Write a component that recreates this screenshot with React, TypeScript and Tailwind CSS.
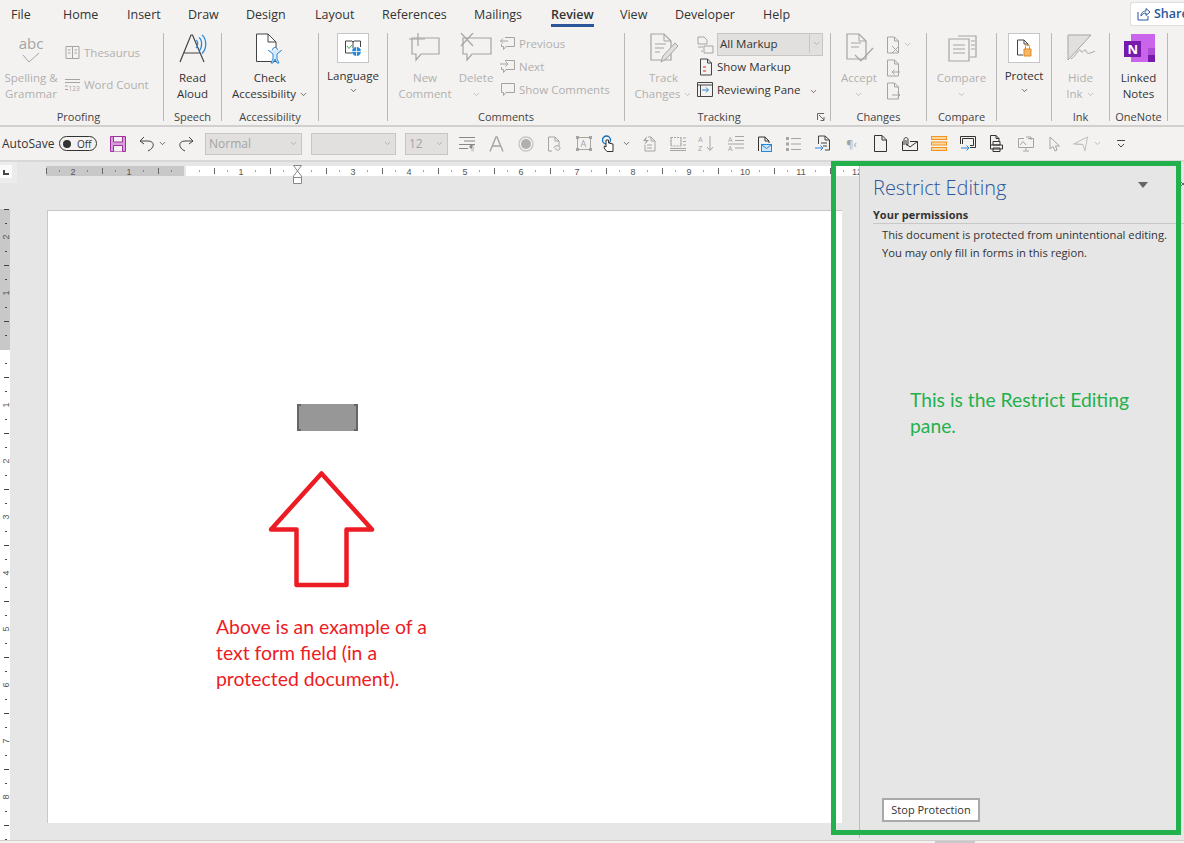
import type { ReactNode } from 'react';
import { ChevronDown } from 'lucide-react';

const ui = { fontFamily: '"Open Sans", "Noto Sans", sans-serif' };

const tabs = [
    { t: 'File', w: 'w-[52px]' },
    { t: 'Home', w: 'w-[64px]' },
    { t: 'Insert', w: 'w-[61px]' },
    { t: 'Draw', w: 'w-[58px]' },
    { t: 'Design', w: 'w-[69px]' },
    { t: 'Layout', w: 'w-[67px]' },
    { t: 'References', w: 'w-[92px]' },
    { t: 'Mailings', w: 'w-[77px]' },
    { t: 'Review', w: 'w-[69px]' },
    { t: 'View', w: 'w-[55px]' },
    { t: 'Developer', w: 'w-[88px]' },
    { t: 'Help', w: 'w-[50px]' },
];

const Chev = ({ className = 'text-[#444]' }: { className?: string }) => (
    <ChevronDown size={9} strokeWidth={2} className={`inline-block shrink-0 ${className}`} />
);

const Svg = ({ w, h, children, className = '' }: { w: number; h: number; children: ReactNode; className?: string }) => (
    <svg width={w} height={h} viewBox={`0 0 ${w} ${h}`} fill="none" className={`shrink-0 ${className}`}>
        {children}
    </svg>
);

// one ribbon group, width includes the separator on its right
const Group = ({ w, label, labelClass = '', extra, children }: { w: string; label?: string; labelClass?: string; extra?: ReactNode; children: ReactNode }) => (
    <div className={`flex h-[88px] shrink-0 flex-col border-r border-[#b9b8b6] ${w}`}>
        <div className="flex h-[76px] shrink-0">{children}</div>
        <div className="flex h-4 shrink-0 items-center">
            <div className={`flex-1 text-center text-[11px] leading-4 text-[#444] ${labelClass}`}>{label}</div>
            {extra}
        </div>
    </div>
);

const BigLabel = ({ children, off }: { children: ReactNode; off?: boolean }) => (
    <div className={`whitespace-nowrap text-center text-[11.5px] leading-4 ${off ? 'text-[#b1b0ae]' : 'text-[#333]'}`}>{children}</div>
);

const SmallRow = ({ icon, text, off, gap = 'gap-1' }: { icon: ReactNode; text: string; off?: boolean; gap?: string }) => (
    <div className={`flex h-[23px] items-center text-[11.5px] ${gap} ${off ? 'text-[#b1b0ae]' : 'text-[#333]'}`}>
        {icon}
        <span className="whitespace-nowrap">{text}</span>
    </div>
);

const G = '#a5a4a2';

const BubbleIcon = ({ arrow }: { arrow?: 'l' | 'r' }) => (
    <Svg w={15} h={15}>
        <path d={arrow ? 'M5 1.5H14.5V10.5H6L3.5 13.5V10.5H1.5V8' : 'M1.5 1.5H14.5V10.5H6L3.5 13.5V10.5H1.5Z'} stroke={G} />
        {arrow === 'l' && <path d="M8 5H.5M3 2.5L.5 5L3 7.5" stroke={G} />}
        {arrow === 'r' && <path d="M0 5H8M5.5 2.5L8 5L5.5 7.5" stroke={G} />}
    </Svg>
);

const DocIcon = ({ stroke = G, children }: { stroke?: string; children?: ReactNode }) => (
    <Svg w={14} h={18}>
        <path d="M1.5 1H8.5L12.5 5V17H1.5Z" stroke={stroke} />
        <path d="M8.5 1V5H12.5" stroke={stroke} />
        {children}
    </Svg>
);

function Ribbon() {
    return (
        <div className="flex h-[96px] bg-[#f3f2f1] pl-[2px] pt-[4px]">
            <Group w="w-[162px]" label="Proofing" labelClass="pr-[8px]">
                <div className="flex w-[58px] flex-col items-center">
                    <div className="mt-[2px] text-[15px] leading-[16px] text-[#a5a4a2]">abc</div>
                    <Svg w={20} h={13} className="mt-[1px]">
                        <path d="M2 3L8 10L18 1" stroke={G} />
                    </Svg>
                    <div className="mt-[5px]">
                        <BigLabel off>Spelling &amp;</BigLabel>
                        <BigLabel off>Grammar</BigLabel>
                    </div>
                </div>
                <div className="ml-[5px] flex flex-col pt-[8px]">
                    <SmallRow
                        off
                        text="Thesaurus"
                        icon={
                            <Svg w={15} h={15}>
                                <path d="M1 1.5H14V13.5H1ZM7.5 1.5V13.5M3 5H5.5M3 8H5.5M9.5 5H12M9.5 8H12" stroke={G} />
                            </Svg>
                        }
                    />
                    <div className="h-[9px]" />
                    <SmallRow
                        off
                        gap="gap-[4px]"
                        text="Word Count"
                        icon={
                            <Svg w={15} h={15}>
                                <path d="M0 2.5H15M0 5.5H15M0 9H3M0 12.5H3" stroke={G} />
                                <text x="3.5" y="14" fontSize="6.5" fill={G}>123</text>
                            </Svg>
                        }
                    />
                </div>
            </Group>
            <Group w="w-[58px]" label="Speech">
                <div className="flex w-full flex-col items-center">
                    <Svg w={32} h={32}>
                        <path d="M3 29L14 2H15.5L27 29M7 20H23" stroke="#444" strokeWidth="1.2" />
                        <path d="M19 7C21 8 21.5 13 19 15M22 4.5C25.5 7 25.5 15 22 18M25 2C30 6 30 16 25 20.5" stroke="#2b88d8" strokeWidth="1.3" />
                    </Svg>
                    <div className="mt-[5px]">
                        <BigLabel>Read</BigLabel>
                        <BigLabel>Aloud</BigLabel>
                    </div>
                </div>
            </Group>
            <Group w="w-[97px]" label="Accessibility">
                <div className="flex w-full flex-col items-center">
                    <Svg w={30} h={32}>
                        <path d="M1.5 1H13L21 9V28.5H1.5Z" fill="#fff" stroke="#444" />
                        <path d="M13 1V9H21" stroke="#444" />
                        <circle cx="20" cy="17" r="2.5" stroke="#2b88d8" fill="#fff" />
                        <path d="M13 17L18 21V26L16 30H18L20 26L22 30H24L22 26V21L27 17" stroke="#2b88d8" fill="#d6e9f8" />
                    </Svg>
                    <div className="mt-[5px]">
                        <BigLabel>Check</BigLabel>
                        <BigLabel>
                            Accessibility <Chev />
                        </BigLabel>
                    </div>
                </div>
            </Group>
            <Group w="w-[69px]">
                <div className="flex w-full flex-col items-center">
                    <div className="flex h-[30px] w-[32px] items-center justify-center border border-[#c6c6c6] bg-white">
                        <Svg w={18} h={18}>
                            <path d="M8 14H1.5V2H8L9 3L10 2H16.5V8M9 3V9" stroke="#444" />
                            <path d="M3 7L5 9.5L8 6" stroke="#3aa655" />
                            <circle cx="12.5" cy="12.5" r="4.5" fill="#2b88d8" />
                            <path d="M8 12.5H17M12.5 8V17" stroke="#fff" strokeWidth=".8" />
                        </Svg>
                    </div>
                    <div className="mt-[5px]">
                        <BigLabel>Language</BigLabel>
                    </div>
                    <div className="leading-[10px]">
                        <Chev />
                    </div>
                </div>
            </Group>
            <Group w="w-[237px]" label="Comments">
                <div className="flex w-[72px] flex-col items-center pl-[2px]">
                    <Svg w={32} h={32}>
                        <path d="M3 5H30V21H12L7 27V21H3Z" stroke={G} strokeWidth="1.2" />
                        <path d="M0 6H16M9 0V13" stroke={G} strokeWidth="1.2" />
                    </Svg>
                    <div className="mt-[5px]">
                        <BigLabel off>New</BigLabel>
                        <BigLabel off>Comment</BigLabel>
                    </div>
                </div>
                <div className="flex w-[32px] flex-col items-center">
                    <Svg w={32} h={32}>
                        <path d="M3 5H31V21H12L7 27V21H3Z" stroke={G} strokeWidth="1.2" />
                        <path d="M1 0L13 13M13 0L1 13" stroke={G} strokeWidth="1.2" />
                    </Svg>
                    <div className="mt-[5px]">
                        <BigLabel off>Delete</BigLabel>
                        <div className="text-center leading-[14px]">
                            <Chev className="text-[#b1b0ae]" />
                        </div>
                    </div>
                </div>
                <div className="-mt-px flex flex-col pl-[8px]">
                    <SmallRow off text="Previous" icon={<BubbleIcon arrow="l" />} />
                    <SmallRow off text="Next" icon={<BubbleIcon arrow="r" />} />
                    <SmallRow off text="Show Comments" icon={<BubbleIcon />} />
                </div>
            </Group>
            <Group
                w="w-[206px]"
                label="Tracking"
                labelClass="pr-[4px]"
                extra={
                    <Svg w={8} h={8} className="mr-[5px]">
                        <path d="M.5 7V.5H7M2 2L7 7M7 4V7.5H3.5" stroke="#666" />
                    </Svg>
                }
            >
                <div className="flex w-[72px] flex-col items-center pl-[5px]">
                    <Svg w={32} h={32}>
                        <path d="M3 1H16L23 8V27H3Z" stroke={G} strokeWidth="1.2" />
                        <path d="M16 1V8H23M7 11H18M7 15H16M7 19H12" stroke={G} />
                        <path d="M13 29L15 23L27 10L30 13L18 26Z" stroke={G} fill="#e1e0de" />
                    </Svg>
                    <div className="mt-[5px]">
                        <BigLabel off>Track</BigLabel>
                        <BigLabel off>
                            Changes <Chev className="text-[#b1b0ae]" />
                        </BigLabel>
                    </div>
                </div>
                <div className="flex flex-col">
                    <div className="flex h-[23px] items-center gap-[3px]">
                        <Svg w={17} h={18}>
                            <path d="M1 1H7L10 4V8H1ZM7 10H16V17H7ZM1 11H6M4 15H6" stroke={G} />
                        </Svg>
                        <div className="flex h-[23px] w-[106px] items-center border border-[#c6c6c6] bg-[#e1e0de] pb-[2px] pl-[2px] text-[11.5px] text-[#333]">
                            All Markup
                            <div className="ml-auto flex h-full w-[13px] items-center justify-center border-l border-[#c6c6c6]">
                                <Chev className="text-[#a5a4a2]" />
                            </div>
                        </div>
                    </div>
                    <div className="-mt-px pl-[2px]">
                        <SmallRow
                            gap="gap-[4px]"
                            text="Show Markup"
                            icon={
                                <DocIcon stroke="#444">
                                    <path d="M4 9H7M4 13H7" stroke="#e02020" />
                                </DocIcon>
                            }
                        />
                    </div>
                    <div className="flex items-center">
                        <SmallRow
                            gap="gap-[4px]"
                            text="Reviewing Pane"
                            icon={
                                <Svg w={16} h={15}>
                                    <path d="M.5 .5H15.5V14.5H.5ZM.5 3H15.5M3.5 3V14.5" stroke="#444" />
                                    <path d="M5 8H11M9 5.5L11.5 8L9 10.5" stroke="#2b88d8" />
                                </Svg>
                            }
                        />
                        <span className="ml-[8px] leading-none">
                            <Chev />
                        </span>
                    </div>
                </div>
            </Group>
            <Group w="w-[96px]" label="Changes">
                <div className="flex w-[52px] flex-col items-center pl-[4px]">
                    <Svg w={32} h={32}>
                        <path d="M4 1H16L23 8V26H4Z" stroke={G} strokeWidth="1.2" />
                        <path d="M16 1V8H23M8 10H18M8 14H16" stroke={G} />
                        <path d="M12 22L18 28L30 15" stroke={G} strokeWidth="1.2" />
                    </Svg>
                    <div className="mt-[5px]">
                        <BigLabel off>Accept</BigLabel>
                        <div className="text-center leading-[14px]">
                            <Chev className="text-[#b1b0ae]" />
                        </div>
                    </div>
                </div>
                <div className="flex flex-col pl-[3px]">
                    <div className="flex h-[23px] items-center gap-[3px]">
                        <DocIcon>
                            <path d="M6 10L13 17M13 10L6 17" stroke={G} />
                        </DocIcon>
                        <Chev className="text-[#b1b0ae]" />
                    </div>
                    <div className="flex h-[23px] items-center">
                        <DocIcon>
                            <path d="M14 13H6M8.5 10.5L6 13L8.5 15.5" stroke={G} />
                        </DocIcon>
                    </div>
                    <div className="flex h-[23px] items-center">
                        <DocIcon>
                            <path d="M6 13H14M11.5 10.5L14 13L11.5 15.5" stroke={G} />
                        </DocIcon>
                    </div>
                </div>
            </Group>
            <Group w="w-[70px]" label="Compare">
                <div className="flex w-full flex-col items-center">
                    <Svg w={32} h={32}>
                        <path d="M12 3H30V24H24" stroke={G} strokeWidth="1.2" />
                        <path d="M3 6H23V28H3Z" stroke={G} strokeWidth="1.2" />
                        <path d="M7 12H19M7 16H19M7 20H19M25 8H29M25 12H29M25 16H29" stroke={G} />
                    </Svg>
                    <div className="mt-[5px]">
                        <BigLabel off>Compare</BigLabel>
                        <div className="text-center leading-[14px]">
                            <Chev className="text-[#b1b0ae]" />
                        </div>
                    </div>
                </div>
            </Group>
            <Group w="w-[55px]">
                <div className="flex w-full flex-col items-center">
                    <div className="flex h-[30px] w-[32px] items-center justify-center border border-[#c6c6c6] bg-white">
                        <Svg w={16} h={18}>
                            <path d="M1.5 1H8L12 5V7M8 1V5H12M7 16H1.5V1" stroke="#444" />
                            <path d="M8 10H15V17H8Z" fill="#f2b96b" stroke="#e8871e" />
                            <path d="M9.5 10V7.5C9.5 5 13.5 5 13.5 7.5V10" stroke="#e8871e" />
                        </Svg>
                    </div>
                    <div className="mt-[5px]">
                        <BigLabel>Protect</BigLabel>
                    </div>
                    <div className="leading-[10px]">
                        <Chev />
                    </div>
                </div>
            </Group>
            <Group w="w-[58px]" label="Ink">
                <div className="flex w-full flex-col items-center">
                    <Svg w={32} h={32}>
                        <path d="M3 2H26L3 27Z" fill="#e1e0de" stroke={G} />
                        <path d="M6 26C12 22 14 14 16 18C17 22 20 14 21 18C22 22 26 20 30 18" stroke={G} />
                    </Svg>
                    <div className="mt-[5px]">
                        <BigLabel off>Hide</BigLabel>
                        <BigLabel off>
                            Ink <Chev className="text-[#b1b0ae]" />
                        </BigLabel>
                    </div>
                </div>
            </Group>
            <Group w="w-[58px]" label="OneNote">
                <div className="flex w-full flex-col items-center">
                    <Svg w={32} h={32}>
                        <rect x="8" y="1" width="24" height="28" fill="#ca64ea" />
                        <rect x="25" y="15" width="7" height="7" fill="#ae4bd5" />
                        <rect x="25" y="22" width="7" height="7" fill="#7719aa" />
                        <rect x="1" y="8" width="17" height="16" fill="#7719aa" />
                        <text x="4.5" y="21" fontSize="13" fontWeight="700" fill="#fff">N</text>
                    </Svg>
                    <div className="mt-[5px]">
                        <BigLabel>Linked</BigLabel>
                        <BigLabel>Notes</BigLabel>
                    </div>
                </div>
            </Group>
        </div>
    );
}

const QSelect = ({ w, text }: { w: string; text?: string }) => (
    <div className={`flex h-[22px] shrink-0 items-center justify-between border border-[#c6c6c6] bg-[#e1e0de] px-[3px] text-[12px] text-[#a5a4a2] ${w}`}>
        <span>{text}</span>
        <Chev className="text-[#a5a4a2]" />
    </div>
);

function QatIcon({ kind }: { kind: string }) {
    const blue = '#2b88d8';
    const D = '#333';
    switch (kind) {
        case 'spacing':
            return <Svg w={17} h={16}><path d="M0 1.5H16M5 5H16M0 8.5H16M0 12.5H9" stroke="#8a8886" /><text x="10" y="14" fontSize="8" fill="#8a8886">¶</text></Svg>;
        case 'A':
            return <Svg w={15} h={16}><path d="M1 15.5L7 1H8L14 15.5M3.5 10H11.5" stroke={G} strokeWidth="1.4" /></Svg>;
        case 'circle':
            return <Svg w={16} h={16}><circle cx="8" cy="8" r="7" stroke="#c8c6c4" strokeWidth="1.4" /><circle cx="8" cy="8" r="5" fill="#b1b0ae" /></Svg>;
        case 'doclink':
            return <Svg w={15} h={16}><path d="M1.5 1H8L12 5V10M8 1V5H12M5 15H1.5V1" stroke={G} /><path d="M7 12C7 9 13 9 13 12C13 15 8 15 9 12" stroke={G} /></Svg>;
        case 'textbox':
            return <Svg w={16} h={15}><path d="M1.5 1.5H14.5V13.5H1.5Z" stroke={G} /><path d="M0 0H3V3H0ZM13 0H16V3H13ZM0 12H3V15H0ZM13 12H16V15H13Z" fill={G} /><text x="4.5" y="11" fontSize="9" fill={G}>A</text></Svg>;
        case 'touch':
            return <Svg w={12} h={17}><circle cx="4.5" cy="5" r="4" stroke="#106ebe" strokeWidth="1.3" /><path d="M4 5V12L2.5 11L2 13L5 16.5H11V9L6.5 8V5Z" fill="#fff" stroke={D} /></Svg>;
        case 'zap':
            return <Svg w={14} h={16}><path d="M6 1H9L13 5V15H3V9" stroke={G} /><path d="M9 1V5H13M5 9H10M5 12H10" stroke={G} /><path d="M5 0L1 5H4L2 9L7 4H4Z" fill={G} /></Svg>;
        case 'table':
            return <Svg w={16} h={15}><path d="M1 1.5H11V10H1ZM1 1.5V10M11 1.5V10" stroke={G} strokeDasharray="2 1" /><path d="M0 12.5H16M0 14.5H16M13 2H16M13 5.5H16M13 9H16" stroke={G} /></Svg>;
        case 'sort':
            return <Svg w={17} h={17}><text x="0" y="7" fontSize="7.5" fill={G}>A</text><text x="0" y="16" fontSize="7.5" fill={G}>Z</text><path d="M12 1V15M9 12L12 15.5L15 12" stroke={G} /></Svg>;
        case 'azlines':
            return <Svg w={16} h={17}><text x="0" y="7" fontSize="7" fill={G}>A</text><text x="0" y="16" fontSize="7" fill={G}>A</text><path d="M7 1.5H16M7 5.5H16M0 9H16M7 13H16" stroke={G} /></Svg>;
        case 'mail':
            return <Svg w={15} h={16}><path d="M1.5 15V1H8L12 5V7M8 1V5H12" stroke={D} /><rect x="4.5" y="8.5" width="10" height="7" fill="#cde4f6" stroke={blue} /><path d="M5 9L9.5 12.5L14 9" stroke={blue} /></Svg>;
        case 'bullets':
            return <Svg w={15} h={14}><path d="M0 0H3V3H0ZM0 5.5H3V8.5H0ZM0 11H3V14H0Z" fill={G} /><path d="M5 1.5H15M5 7H15M5 12.5H15" stroke={G} /></Svg>;
        case 'docarrow':
            return <Svg w={16} h={17}><path d="M3.5 9V1H10L14.5 5V15H10M10 1V5H14.5M6 8H12M8 11H12" stroke="#444" /><path d="M0 13H8M5.5 10.5L8 13L5.5 15.5" stroke={blue} /></Svg>;
        case 'pilcrow':
            return <span className="text-[11px] leading-none text-[#a5a4a2]">¶‹</span>;
        case 'page':
            return <Svg w={13} h={17}><path d="M.5 .5H8L12.5 5V16.5H.5ZM8 .5V5H12.5" stroke={D} /></Svg>;
        case 'clipmail':
            return <Svg w={16} h={14}><path d="M.5 4.5V13.5H15.5V4.5L8 10L4 7M.5 4.5H1M8 4.5H15.5" stroke={D} /><path d="M2 8V2.5C2 0 6 0 6 2.5V7C6 8.5 4 8.5 4 7V3" stroke={D} /></Svg>;
        case 'orange':
            return <Svg w={16} h={15}><rect x=".5" y=".5" width="15" height="3" fill="#fad7a0" stroke="#f7941d" /><rect x=".5" y="6" width="15" height="3" fill="#fad7a0" stroke="#f7941d" /><rect x=".5" y="11.5" width="15" height="3" fill="#fad7a0" stroke="#f7941d" /></Svg>;
        case 'screen':
            return <Svg w={16} h={15}><path d="M.5 8V.5H15.5V11.5H10" stroke={D} /><path d="M2.5 8V2.5H13.5V9.5H10" stroke={D} /><path d="M1 12H9M6.5 9.5L9 12L6.5 14.5" stroke={blue} /></Svg>;
        case 'print':
            return <Svg w={15} h={17}><path d="M1.5 11V.5H7L10 3.5V6M7 .5V3.5H10" stroke={D} /><path d="M4 6.5H11V10H4ZM1.5 10H13.5V14H1.5ZM4 13H11V16.5H4Z" fill="#f3f2f1" stroke={D} /></Svg>;
        case 'monitor':
            return <Svg w={16} h={16}><path d="M.5 2.5H6M10 2.5H15.5V11.5H.5V2.5M8 11.5V14.5M5 15H11" stroke={G} /><path d="M2 9L5 5.5L8 9M8 1H13V4" stroke={G} /></Svg>;
        case 'cursor':
            return <Svg w={12} h={16}><path d="M1 1V13L4 10.5L6 15L8 14L6.5 10H10.5Z" stroke={G} /></Svg>;
        default:
            return <Svg w={15} h={16}><path d="M.5 8L14.5 1L12 15L10 8.5ZM10 8.5L3 8" stroke="#c0bfbd" /></Svg>;
    }
}

const Cell = ({ w = 'w-[29px]', children }: { w?: string; children: ReactNode }) => (
    <div className={`flex shrink-0 justify-center ${w}`}>{children}</div>
);

function Qat() {
    const icons = ['spacing', 'A', 'circle', 'doclink', 'textbox'];
    const icons2 = ['zap', 'table', 'sort', 'azlines', 'mail', 'bullets', 'docarrow', 'pilcrow', 'page', 'clipmail', 'orange', 'screen', 'print', 'monitor', 'cursor'];
    return (
        <div className="flex h-[33px] items-center bg-[#f3f2f1] pl-[2px] text-[12px] text-[#333]">
            <span className="w-[57px] shrink-0">AutoSave</span>
            <div className="flex h-[15px] w-[38px] shrink-0 items-center rounded-full border border-[#333] pl-[3px]">
                <span className="h-[8px] w-[8px] rounded-full bg-[#333]" />
                <span className="ml-[6px] text-[10px] leading-none">Off</span>
            </div>
            <div className="ml-[13px] w-[16px] shrink-0">
                <Svg w={16} h={16}>
                    <path d="M.5 .5H15.5V15.5H.5Z" fill="#d69fd8" stroke="#a0309e" />
                    <path d="M3.5 .5H12.5V6H3.5ZM3.5 15.5V9.5H12.5V15.5" fill="#f3f2f1" stroke="#a0309e" />
                </Svg>
            </div>
            <div className="ml-[13px] flex shrink-0 items-center gap-[3px]">
                <Svg w={16} h={16}>
                    <path d="M5 1L1 5L5 8M1 5H9C16 5 16 12 9 15" stroke="#444" />
                </Svg>
                <Chev />
            </div>
            <div className="ml-[11px] shrink-0">
                <Svg w={16} h={16}>
                    <path d="M11 1L15 5L11 8M15 5H7C0 5 0 12 7 15" stroke="#444" />
                </Svg>
            </div>
            <QSelect w="ml-[11px] w-[97px]" text="Normal" />
            <QSelect w="ml-[9px] w-[85px]" />
            <QSelect w="ml-[9px] w-[43px]" text="12" />
            <div className="ml-[5px] flex items-center">
                {icons.map((k) => (
                    <Cell key={k}>
                        <QatIcon kind={k} />
                    </Cell>
                ))}
                <Cell w="w-[20px]">
                    <QatIcon kind="touch" />
                </Cell>
                <Cell w="w-[16px]">
                    <Chev />
                </Cell>
                {icons2.map((k) => (
                    <Cell key={k}>
                        <QatIcon kind={k} />
                    </Cell>
                ))}
                <Cell w="w-[22px]">
                    <QatIcon kind="pen" />
                </Cell>
                <Cell w="w-[12px]">
                    <Chev className="text-[#b1b0ae]" />
                </Cell>
                <div className="ml-[14px]">
                    <Svg w={8} h={8}>
                        <path d="M0 .5H8M1 4L4 7L7 4" stroke="#444" />
                    </Svg>
                </div>
            </div>
        </div>
    );
}

// horizontal ruler: 56px to the inch, zero at 185 in page coords
function HRuler() {
    const marks = [];
    for (let q = -11; q <= 48; q++) {
        const x = 139 + q * 14;
        if (q % 4 === 0 && q !== 0) {
            const n = Math.abs(q / 4);
            if (n === 2 && q > 0) continue;
            marks.push(
                <text key={q} x={x} y={9} fontSize="9" fill="#555" textAnchor="middle" fontFamily="Liberation Sans, sans-serif">
                    {n}
                </text>,
            );
        } else if (q % 2 === 0) {
            if (q !== 0) marks.push(<rect key={q} x={x + 1} y={2} width={1} height={6} fill="#666" />);
        } else {
            marks.push(<rect key={q} x={x} y={4.5} width={1} height={1} fill="#444" />);
        }
    }
    return (
        <svg width="814" height="10" className="ml-[46px] block">
            <rect width="138" height="10" fill="#c8c8c8" />
            <rect x="140" width="674" height="10" fill="#fff" />
            {marks}
        </svg>
    );
}

function VRuler() {
    const marks = [];
    for (let q = -10; q <= 35; q++) {
        const y = 140 + q * 14;
        if (q % 4 === 0 && q !== 0) {
            marks.push(
                <text key={q} x={6} y={y + 3} fontSize="9" fill="#555" textAnchor="middle" fontFamily="Liberation Sans, sans-serif" transform={`rotate(-90 6 ${y})`}>
                    {Math.abs(q / 4)}
                </text>,
            );
        } else if (q % 2 === 0) {
            if (q !== 0) marks.push(<rect key={q} x={4} y={y} width={5} height={1} fill="#444" />);
        } else {
            marks.push(<rect key={q} x={5} y={y} width={2} height={1} fill="#444" />);
        }
    }
    return (
        <svg width="10" height="631" className="block">
            <rect width="10" height="141" fill="#c8c8c8" />
            <rect y="141" width="10" height="490" fill="#fff" />
            {marks}
        </svg>
    );
}

export default function App() {
    return (
        <div className="relative flex h-[843px] w-[1184px] flex-col overflow-hidden bg-[#e6e6e6]" style={ui}>
            {/* tab row */}
            <div className="flex h-[29px] items-start bg-[#f3f2f1] pl-[11px] text-[12.5px] text-[#333]">
                {tabs.map(({ t, w }) => (
                    <div key={t} className={`mt-[6px] shrink-0 ${w}`}>
                        <span className={`inline-block whitespace-nowrap leading-[18px] ${t === 'Review' ? 'border-b-[3px] border-[#2b579a] font-semibold' : ''}`}>{t}</span>
                    </div>
                ))}
                <div className="ml-auto mt-[2px] flex h-[24px] w-[54px] shrink-0 items-center gap-[3px] overflow-hidden rounded-l-[3px] border border-r-0 border-[#e1dfdd] bg-white pl-[6px] text-[12.5px] font-semibold text-[#2b579a]">
                    <Svg w={14} h={14}>
                        <path d="M1 5V13H11V9M4 9C4 5 7 4 9 4V1.5L13 5L9 8.5V6C7 6 5 7 4 9Z" stroke="#2b579a" />
                    </Svg>
                    Share
                </div>
            </div>
            <Ribbon />
            <div className="h-[2px] bg-[#d2d0ce]" />
            <Qat />
            <div className="h-[2px] bg-[#d9d8d6]" />
            {/* work area */}
            <div className="relative flex min-h-0 flex-1 flex-col">
                <div className="h-[47px] pt-[4px]">
                    <HRuler />
                </div>
                <div className="flex min-h-0 flex-1">
                    <div className="w-[10px] shrink-0">
                        <VRuler />
                    </div>
                    <div className="ml-[37px] mt-[1px] h-[613px] w-[795px] shrink-0 border-l border-t border-[#c8c8c8] bg-white" />
                </div>
                <div className="h-[1px] bg-[#d2d0ce]" />
                <div className="h-[2px] bg-[#f3f2f1] pl-[935px]">
                    <div className="h-full w-[40px] bg-[#c8c8c8]" />
                </div>
                {/* tab stop box */}
                <div className="absolute left-0 top-0 flex h-[21px] w-[17px] items-start bg-[#ececec] pt-[3px]">
                    <div className="flex h-[13px] w-[12px] items-center justify-center bg-[#fafafa]">
                        <span className="mt-[2px] h-[5px] w-[6px] border-b-2 border-l-2 border-[#444]" />
                    </div>
                </div>
                {/* indent marker */}
                <div className="absolute left-[293px] top-[3px]">
                    <Svg w={9} h={19}>
                        <path d="M.5 .5H8.5L4.5 6L8.5 11V18.5H.5V11L4.5 6Z" fill="#fff" stroke="#8a8886" />
                        <path d="M.5 12.5H8.5" stroke="#8a8886" />
                    </Svg>
                </div>
            </div>

            {/* form field on the page */}
            <div className="absolute left-[297px] top-[404px] h-[27px] w-[61px] border-x-2 border-[#666] bg-[#979797]">
                <span className="absolute left-0 top-0 h-[2px] w-[2px] bg-[#666]" />
                <span className="absolute bottom-0 left-0 h-[2px] w-[2px] bg-[#666]" />
                <span className="absolute right-0 top-0 h-[2px] w-[2px] bg-[#666]" />
                <span className="absolute bottom-0 right-0 h-[2px] w-[2px] bg-[#666]" />
            </div>
            {/* red annotation */}
            <div className="absolute left-[268px] top-[470px]">
                <Svg w={108} h={118}>
                    <path d="M53.5 3.5L104 59.5H78.5V115H28.5V59.5H3Z" stroke="#ed1c24" strokeWidth="4.5" strokeLinejoin="round" />
                </Svg>
            </div>
            <div className="absolute left-[216px] top-[614px] w-[230px] text-[19.4px] leading-[26px] text-[#ed1c24]" style={{ fontFamily: 'Lato, sans-serif' }}>
                Above is an example of a text form field (in a protected document).
            </div>

            {/* restrict editing pane */}
            <div className="absolute bottom-[5px] left-[859px] right-0 top-[162px] flex flex-col border-l border-[#bdbdbd] bg-[#e6e6e6]">
                <div className="flex items-start pl-[13px] pr-[36px] pt-[11px]">
                    <span className="text-[20px] font-light leading-[30px] text-[#2b579a]">Restrict Editing</span>
                    <span className="ml-auto mt-[9px] h-0 w-0 border-x-[5px] border-t-[6px] border-x-transparent border-t-[#666]" />
                </div>
                <div className="ml-[13px] mt-[4px] border-b border-[#c8c8c8] text-[11px] font-bold leading-[16px] text-[#333]">Your permissions</div>
                <div className="mt-[2px] pl-[22px] text-[11.2px] leading-[18px] text-[#333]">
                    <div className="whitespace-nowrap">This document is protected from unintentional editing.</div>
                    <div>You may only fill in forms in this region.</div>
                </div>
                <div className="ml-[50px] mt-[125px] w-[235px] text-[19.3px] leading-[26px] text-[#22b14c]" style={{ fontFamily: 'Lato, sans-serif' }}>
                    This is the Restrict Editing pane.
                </div>
                <button className="mb-[16px] ml-[22px] mt-auto flex h-[24px] w-[98px] items-center justify-center border-2 border-[#a9a9a9] bg-white text-[11px] text-[#333]">
                    Stop Protection
                </button>
            </div>
            {/* close glyph of the pane, cut by the window edge */}
            <div className="absolute left-[1179px] top-[180px]">
                <Svg w={8} h={8}>
                    <path d="M1 1L7 7M7 1L1 7" stroke="#666" />
                </Svg>
            </div>
            {/* green highlight */}
            <div className="pointer-events-none absolute left-[831px] top-[161px] h-[674px] w-[350px] border-[5px] border-[#22b14c]" />
        </div>
    );
}
